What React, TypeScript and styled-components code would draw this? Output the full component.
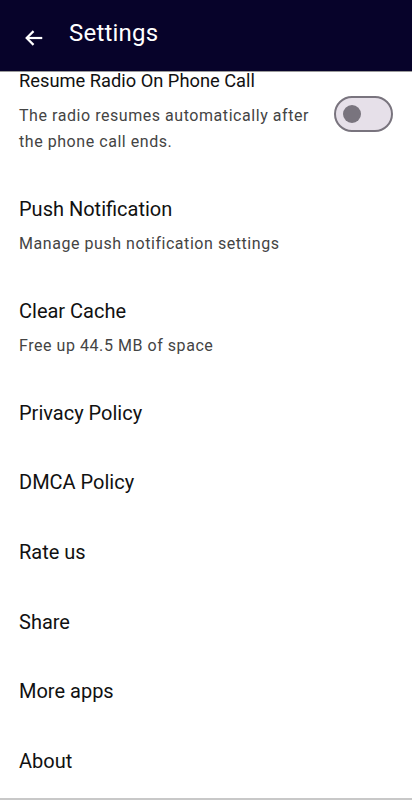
import React from "react";
import styled, { createGlobalStyle } from "styled-components";

const Global = createGlobalStyle`
  html, body { margin: 0; padding: 0; background: #fff; }
  body { font-family: Roboto, "Noto Sans", sans-serif; -webkit-font-smoothing: antialiased; }
  * { box-sizing: border-box; }
`;

const Screen = styled.div`
  width: 412px;
  height: 800px;
  overflow: hidden;
  display: flex;
  flex-direction: column;
  background: #fff;
  border-bottom: 2px solid #c8c8c8;
`;

const Header = styled.header`
  position: relative;
  z-index: 2;
  flex: 0 0 72px;
  height: 72px;
  background: #07032a;
  display: flex;
  align-items: center;
  padding-left: 22px;
  gap: 23px;
  border-bottom: 1px solid #9a9a9a;
`;

const BackButton = styled.button`
  width: 24px;
  height: 24px;
  padding: 0;
  border: none;
  background: none;
  display: flex;
  align-items: center;
  justify-content: center;
  margin-top: 4px;
`;

const Title = styled.h1`
  margin: 0 0 5px 0;
  color: #fff;
  font-size: 24px;
  font-weight: 400;
  letter-spacing: 0.2px;
`;

const List = styled.div`
  display: flex;
  flex-direction: column;
  margin-top: -26.5px;
`;

const Item = styled.div`
  display: flex;
  align-items: center;
  padding: 22px 19px 21.7px 19px;
  gap: 16px;
`;

const RichItem = styled(Item)`
  padding-bottom: 19px;
`;

const Texts = styled.div`
  flex: 1;
  display: flex;
  flex-direction: column;
  gap: 9px;
`;

const ItemTitle = styled.div<{ $small?: boolean }>`
  font-size: ${(p) => (p.$small ? "18.3px" : "20px")};
  line-height: 26px;
  color: #111;
`;

const ItemSub = styled.div`
  font-size: 16px;
  line-height: 26px;
  color: #444;
  letter-spacing: 0.55px;
`;

const Track = styled.div`
  flex: 0 0 59px;
  width: 59px;
  height: 36px;
  border-radius: 18px;
  border: 2.5px solid #79747e;
  background: #e6e0e9;
  display: flex;
  align-items: center;
  padding-left: 7px;
  margin-top: 6px;
`;

const Thumb = styled.div`
  width: 18px;
  height: 18px;
  border-radius: 50%;
  background: #79747e;
`;

const items: { title: string; sub?: string }[] = [
  { title: "Push Notification", sub: "Manage push notification settings" },
  { title: "Clear Cache", sub: "Free up 44.5 MB of space" },
  { title: "Privacy Policy" },
  { title: "DMCA Policy" },
  { title: "Rate us" },
  { title: "Share" },
  { title: "More apps" },
  { title: "About" },
];

export default function App() {
  return (
    <>
      <Global />
      <Screen>
        <Header>
          <BackButton aria-label="Back">
            <svg width="22" height="22" viewBox="0 0 24 24" fill="none" stroke="#fff" strokeWidth="2.4" strokeLinecap="butt">
              <path d="M21 12H4" />
              <path d="M11.5 4.5L4 12l7.5 7.5" />
            </svg>
          </BackButton>
          <Title>Settings</Title>
        </Header>
        <List>
          <RichItem>
            <Texts>
              <ItemTitle $small>Resume Radio On Phone Call</ItemTitle>
              <ItemSub>The radio resumes automatically after the phone call ends.</ItemSub>
            </Texts>
            <Track>
              <Thumb />
            </Track>
          </RichItem>
          {items.map((it) =>
            it.sub ? (
              <RichItem key={it.title}>
                <Texts>
                  <ItemTitle>{it.title}</ItemTitle>
                  <ItemSub>{it.sub}</ItemSub>
                </Texts>
              </RichItem>
            ) : (
              <Item key={it.title}>
                <Texts>
                  <ItemTitle>{it.title}</ItemTitle>
                </Texts>
              </Item>
            )
          )}
        </List>
      </Screen>
    </>
  );
}
